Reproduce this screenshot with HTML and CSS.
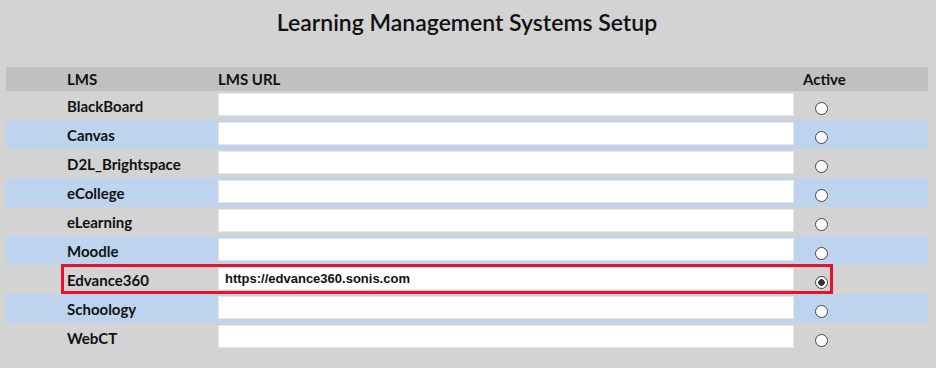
FILE: index.html
```html
<!DOCTYPE html>
<html>

<head>
    <meta charset="UTF-8">
    <title>Learning Management Systems Setup</title>
    <link rel="stylesheet" href="styles.css">
</head>

<body>
    <h1>Learning Management Systems Setup</h1>

    <div class="lms-table">
        <div class="row header">
            <div class="cell"></div>
            <div class="cell name">LMS</div>
            <div class="cell url">LMS URL</div>
            <div class="cell active">Active</div>
        </div>

        <div class="row">
            <div class="cell"></div>
            <div class="cell name">BlackBoard</div>
            <div class="cell url"><input type="text" class="url-input"></div>
            <div class="cell active"><input type="radio" name="lms" class="radio"></div>
        </div>
        <div class="row alt">
            <div class="cell"></div>
            <div class="cell name">Canvas</div>
            <div class="cell url"><input type="text" class="url-input"></div>
            <div class="cell active"><input type="radio" name="lms" class="radio"></div>
        </div>
        <div class="row">
            <div class="cell"></div>
            <div class="cell name">D2L_Brightspace</div>
            <div class="cell url"><input type="text" class="url-input"></div>
            <div class="cell active"><input type="radio" name="lms" class="radio"></div>
        </div>
        <div class="row alt">
            <div class="cell"></div>
            <div class="cell name">eCollege</div>
            <div class="cell url"><input type="text" class="url-input"></div>
            <div class="cell active"><input type="radio" name="lms" class="radio"></div>
        </div>
        <div class="row">
            <div class="cell"></div>
            <div class="cell name">eLearning</div>
            <div class="cell url"><input type="text" class="url-input"></div>
            <div class="cell active"><input type="radio" name="lms" class="radio"></div>
        </div>
        <div class="row alt">
            <div class="cell"></div>
            <div class="cell name">Moodle</div>
            <div class="cell url"><input type="text" class="url-input"></div>
            <div class="cell active"><input type="radio" name="lms" class="radio"></div>
        </div>
        <!-- Selected LMS, outlined -->
        <div class="row selected">
            <div class="cell"></div>
            <div class="cell name">Edvance360</div>
            <div class="cell url"><input type="text" class="url-input" value="https://edvance360.sonis.com"></div>
            <div class="cell active"><input type="radio" name="lms" class="radio" checked></div>
        </div>
        <div class="row alt">
            <div class="cell"></div>
            <div class="cell name">Schoology</div>
            <div class="cell url"><input type="text" class="url-input"></div>
            <div class="cell active"><input type="radio" name="lms" class="radio"></div>
        </div>
        <div class="row">
            <div class="cell"></div>
            <div class="cell name">WebCT</div>
            <div class="cell url"><input type="text" class="url-input"></div>
            <div class="cell active"><input type="radio" name="lms" class="radio"></div>
        </div>
    </div>
</body>

</html>
```

FILE: styles.css
```css
body {
    margin: 0;
    padding: 0 8px 0 6px;
    background-color: #d3d3d3;
    font-family: 'Lato', 'Liberation Sans', sans-serif;
    color: #111;
    height: 368px;
    overflow: hidden;
}

h1 {
    margin: 0;
    padding-top: 8px;
    height: 67px;
    box-sizing: border-box;
    text-align: center;
    font-size: 23px;
    font-weight: 600;
}

.lms-table {
    display: flex;
    flex-direction: column;
}

.row {
    display: grid;
    grid-template-columns: 55px 157px 576px 134px; /* spacer, name, url, active */
    height: 29px;
    position: relative;
}

.row.header {
    height: 24px;
    background-color: #c0c0c0;
}

.row.alt {
    background-color: #bdd3ee;
}

.cell {
    display: flex;
    align-items: center;
    font-size: 15px;
    font-weight: 700;
}

.name {
    padding-left: 6px;
}

.active {
    padding-left: 9px;
}

.row .url {
    align-items: flex-start;
    padding-top: 2px;
}

.row.header .url {
    align-items: center;
    padding-top: 0;
}

.url-input {
    width: 576px;
    height: 23px;
    box-sizing: border-box;
    margin: 0;
    border: 1px solid #e6e6e6;
    background-color: #fff;
    padding: 0 6px;
    font-family: 'Liberation Sans', Arial, sans-serif;
    font-size: 13px;
    font-weight: 700;
    color: #111;
    outline: none;
}

.radio {
    appearance: none;
    width: 13px;
    height: 13px;
    margin: 11px 0 0 12px;
    align-self: flex-start;
    border: 1px solid #444;
    border-radius: 50%;
    background-color: #fff;
    box-sizing: border-box;
}

.radio:checked {
    background: radial-gradient(circle, #333 0 3px, #fff 3.5px);
}

/* red outline drawn over the selected row */
.row.selected::after {
    content: '';
    position: absolute;
    left: 55px;
    top: -1px;
    width: 772px;
    height: 30px;
    border: 3px solid #e8112d;
    box-sizing: border-box;
    pointer-events: none;
}
```
